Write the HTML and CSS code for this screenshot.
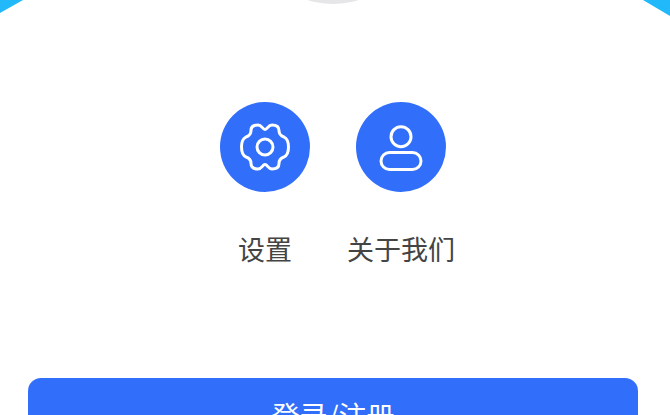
FILE: index.html
```html
<!DOCTYPE html>
<html lang="zh-CN">
<head>
    <meta charset="UTF-8">
    <meta name="viewport" content="width=device-width, initial-scale=1.0">
    <title>我的</title>
    <link rel="stylesheet" href="styles.css">
</head>
<body>
    <div class="header">
        <div class="corner corner-left"></div>
        <div class="corner corner-right"></div>
        <div class="avatar"></div>
    </div>
    <div class="menu-container">
        <div class="menu-item">
            <div class="menu-icon">
                <svg viewBox="0 0 50 50" width="50" height="50" fill="none" stroke="#fff" stroke-width="3" stroke-linejoin="round">
                    <path d="M25 7.500C27.500 7.500 28 3 32 3C36 3 39 4.500 39 8.500C39 12 41 14 44 15C47 16.500 48.500 21 48.500 25C48.500 29 47 33.500 44 35C41 36 39 38 39 41.500C39 45.500 36 47 32 47C28 47 27.500 42.500 25 42.500C22.500 42.500 22 47 18 47C14 47 11 45.500 11 41.500C11 38 9 36 6 35C3 33.500 1.500 29 1.500 25C1.500 21 3 16.500 6 15C9 14 11 12 11 8.500C11 4.500 14 3 18 3C22 3 22.500 7.500 25 7.500Z"/>
                    <circle cx="25" cy="25" r="8"/>
                </svg>
            </div>
            <span class="menu-label">设置</span>
        </div>
        <div class="menu-item">
            <div class="menu-icon">
                <svg viewBox="0 0 46 48" width="46" height="48" fill="none" stroke="#fff" stroke-width="3">
                    <circle cx="23" cy="13.700" r="10"/>
                    <rect x="3" y="29.500" width="40" height="17" rx="8.500"/>
                </svg>
            </div>
            <span class="menu-label">关于我们</span>
        </div>
    </div>
    <div class="login-wrap">
        <button class="login-button">登录/注册</button>
    </div>
</body>
</html>
```

FILE: styles.css
```css
body {
    margin: 0;
    height: 415px;
    background: #fff;
    font-family: "Noto Sans CJK SC", "Liberation Sans", sans-serif;
    overflow: hidden;
}

.header {
    position: relative;
    height: 102px;
    overflow: hidden;
}

.corner {
    position: absolute;
    top: 0;
    background: #22b9fb;
}

.corner-left {
    left: 0;
    width: 23px;
    height: 13px;
    clip-path: polygon(0 0, 100% 0, 0 100%);
}

.corner-right {
    right: 0;
    width: 27px;
    height: 16px;
    clip-path: polygon(0 0, 100% 0, 100% 100%);
}

.avatar {
    position: absolute;
    top: -168px;
    left: 247px;
    width: 172px;
    height: 172px;
    border-radius: 50%;
    background: #e6e6e8;
}

.menu-container {
    display: flex;
    justify-content: center;
    gap: 28px;
    width: 666px;
}

.menu-item {
    display: flex;
    flex-direction: column;
    align-items: center;
    width: 108px;
}

.menu-icon {
    display: flex;
    align-items: center;
    justify-content: center;
    width: 90px;
    height: 90px;
    border-radius: 50%;
    background: #316ffb;
}

.menu-label {
    margin-top: 37px;
    font-size: 27px;
    line-height: 40px;
    color: #444;
    white-space: nowrap;
}

.login-wrap {
    width: 610px;
    margin: 109px 0 0 28px;
}

.login-button {
    display: block;
    width: 100%;
    height: 74px;
    border: none;
    border-radius: 13px;
    background: #316ffb;
    color: #fff;
    font-family: inherit;
    font-size: 28px;
}
```
